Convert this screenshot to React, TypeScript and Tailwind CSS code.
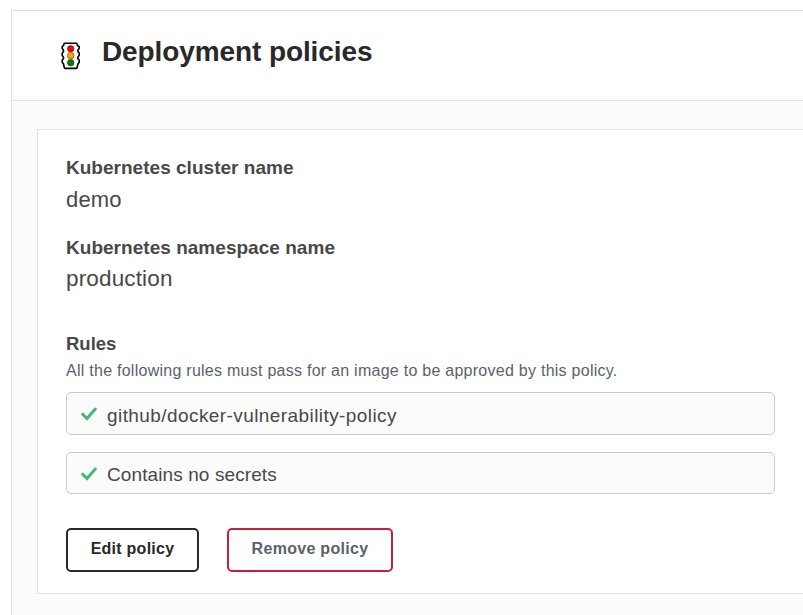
import React from "react";

function TrafficLight() {
  return (
    <svg width="20" height="28" viewBox="0 0 20 28" className="block shrink-0">
      <path
        d="M3.8 1.2H15.2Q16.1 1.2 16.2 2.2L16.4 3.6L18.2 4.4V6.4L16.9 8.2V9.6L18.2 11V13.4L16.9 15.2V16.6L18.2 18V20.2L16.9 22L16.2 25.4Q16 26.4 15.2 26.4H4.2Q3.4 26.4 3.2 25.4L2.5 22L1.2 20.2V18L2.5 16.6V15.2L1.2 13.4V11L2.5 9.6V8.2L1.2 6.4V4.4L2.6 3.6L2.8 2.2Q2.9 1.2 3.8 1.2Z"
        fill="#fff"
        stroke="#000"
        strokeWidth="1.6"
        strokeLinejoin="round"
      />
      <circle cx="9.7" cy="6.8" r="3.3" fill="#ff0000" stroke="#222" strokeWidth="0.5" />
      <circle cx="9.7" cy="13.7" r="3.3" fill="#ffa500" stroke="#222" strokeWidth="0.5" />
      <circle cx="9.7" cy="20.7" r="3.3" fill="#008000" stroke="#222" strokeWidth="0.5" />
    </svg>
  );
}

function Check() {
  return (
    <svg width="16" height="14" viewBox="0 0 16 14" className="block shrink-0">
      <path d="M1.7 7.2L6 11.6L14.3 2.1" fill="none" stroke="#43b977" strokeWidth="3" strokeLinecap="round" strokeLinejoin="miter" />
    </svg>
  );
}

export default function App() {
  return (
    <div className="h-[615px] w-full overflow-hidden bg-white pl-[11px] pt-[10px] font-['Liberation_Sans',Arial,sans-serif] text-[#484848] whitespace-nowrap">
      <main className="h-[605px] border-l border-t border-[#e2e2e2] bg-[#fbfbfb]">
        <header className="flex h-[90px] items-start border-b border-[#e2e2e2] bg-white pl-[49px] pt-[31px]">
          <TrafficLight />
          <h1 className="-mt-[6px] ml-[21px] text-[28px] leading-8 font-bold tracking-[-0.1px] text-[#292929]">Deployment policies</h1>
        </header>
        <section className="mt-7 ml-[25px] h-[465px] border-y border-l border-[#e2e2e2] bg-white pt-[26px] pl-7">
          <h2 className="text-[19px] leading-6 font-bold tracking-[0.02px]">Kubernetes cluster name</h2>
          <p className="mt-1 text-[22px] leading-8 tracking-[0.15px]">demo</p>
          <h2 className="mt-5 text-[19px] leading-6 font-bold tracking-[0.03px]">Kubernetes namespace name</h2>
          <p className="mt-[3px] text-[22.5px] leading-8 tracking-[0.15px]">production</p>
          <h2 className="mt-[37px] text-[18.5px] leading-6 font-bold">Rules</h2>
          <p className="mt-1 text-[16px] leading-[22px] tracking-[0.26px] text-[#59626d]">All the following rules must pass for an image to be approved by this policy.</p>
          <ul className="mt-[10px] w-[709px] text-[19px] leading-6">
            <li className="flex h-[43px] items-center gap-[10px] rounded-[5px] border border-[#cacaca] bg-[#fbfbfb] pl-[14px]">
              <Check />
              <span className="mt-[5px] tracking-[0.42px]">github/docker-vulnerability-policy</span>
            </li>
            <li className="mt-[17px] flex h-[42px] items-center gap-[10px] rounded-[5px] border border-[#cacaca] bg-[#fbfbfb] pt-px pl-[14px]">
              <Check />
              <span className="mt-[3px] tracking-[0.1px]">Contains no secrets</span>
            </li>
          </ul>
          <div className="mt-[34px] flex gap-7">
            <button className="h-11 w-[133px] rounded-[5px] border-2 border-[#292929] pb-[3px] text-[16px] font-bold tracking-[0.25px] text-[#292929]">Edit policy</button>
            <button className="h-11 w-[166px] rounded-[5px] border-2 border-[#c7203d] pb-[3px] text-[16px] font-bold tracking-[0.3px] text-[#59626d]">Remove policy</button>
          </div>
        </section>
      </main>
    </div>
  );
}
